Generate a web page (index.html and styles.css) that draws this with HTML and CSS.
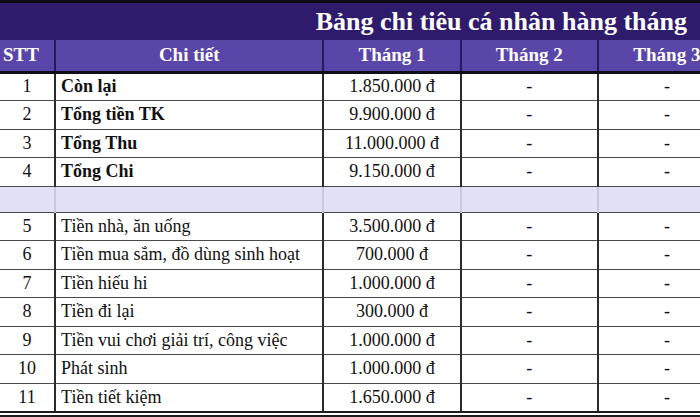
FILE: index.html
```html
<!DOCTYPE html>
<html lang="vi">
<head>
<meta charset="utf-8">
<title>Bảng chi tiêu cá nhân hàng tháng</title>
<link rel="stylesheet" href="styles.css">
</head>
<body>
<div class="sheet">
  <div class="title-bar"><h1 class="title">Bảng chi tiêu cá nhân hàng tháng</h1></div>
  <table class="grid">
    <colgroup>
      <col class="c-stt"><col class="c-detail"><col class="c-m"><col class="c-m"><col class="c-m">
    </colgroup>
    <thead>
      <tr class="head">
        <th>STT</th><th>Chi tiết</th><th>Tháng 1</th><th>Tháng 2</th><th>Tháng 3</th>
      </tr>
    </thead>
    <tbody>
      <tr class="sum"><td class="n">1</td><td class="d">Còn lại</td><td class="v">1.850.000 đ</td><td class="v">-</td><td class="v">-</td></tr>
      <tr class="sum"><td class="n">2</td><td class="d">Tổng tiền TK</td><td class="v">9.900.000 đ</td><td class="v">-</td><td class="v">-</td></tr>
      <tr class="sum"><td class="n">3</td><td class="d">Tổng Thu</td><td class="v">11.000.000 đ</td><td class="v">-</td><td class="v">-</td></tr>
      <tr class="sum"><td class="n">4</td><td class="d">Tổng Chi</td><td class="v">9.150.000 đ</td><td class="v">-</td><td class="v">-</td></tr>
      <tr class="gap"><td></td><td></td><td></td><td></td><td></td></tr>
      <tr><td class="n">5</td><td class="d">Tiền nhà, ăn uống</td><td class="v">3.500.000 đ</td><td class="v">-</td><td class="v">-</td></tr>
      <tr><td class="n">6</td><td class="d">Tiền mua sắm, đồ dùng sinh hoạt</td><td class="v">700.000 đ</td><td class="v">-</td><td class="v">-</td></tr>
      <tr><td class="n">7</td><td class="d">Tiền hiếu hi</td><td class="v">1.000.000 đ</td><td class="v">-</td><td class="v">-</td></tr>
      <tr><td class="n">8</td><td class="d">Tiền đi lại</td><td class="v">300.000 đ</td><td class="v">-</td><td class="v">-</td></tr>
      <tr><td class="n">9</td><td class="d">Tiền vui chơi giải trí, công việc</td><td class="v">1.000.000 đ</td><td class="v">-</td><td class="v">-</td></tr>
      <tr><td class="n">10</td><td class="d">Phát sinh</td><td class="v">1.000.000 đ</td><td class="v">-</td><td class="v">-</td></tr>
      <tr class="last"><td class="n">11</td><td class="d">Tiền tiết kiệm</td><td class="v">1.650.000 đ</td><td class="v">-</td><td class="v">-</td></tr>
    </tbody>
  </table>
  <div class="foot-line"></div>
</div>
</body>
</html>
```
FILE: styles.css
```css
html, body {
  margin: 0;
  padding: 0;
  background: #ffffff;
}

.sheet {
  width: 700px;
  height: 417px;
  overflow: hidden;
  font-family: "Liberation Serif", "Times New Roman", serif;
  color: #111;
  border-top: 3px solid #0c0a14;
  box-sizing: border-box;
}

.title-bar {
  height: 37px;
  background: #2e1b6c;
  display: flex;
  align-items: center;
  justify-content: flex-end;
  padding-right: 13px;
}

.title {
  margin: 0;
  font-size: 26px;
  font-weight: bold;
  color: #ffffff;
}

.grid {
  width: 735px;
  table-layout: fixed;
  border-collapse: collapse;
}

.c-stt { width: 55px; }
.c-detail { width: 268px; }
.c-m { width: 137px; }

.head th {
  height: 32px;
  padding: 0;
  background: #5a45a8;
  color: #ffffff;
  font-size: 19px;
  font-weight: bold;
  text-align: center;
  border-left: 2px solid #2a1c5a;
  border-bottom: 3px solid #0f0d16;
  box-sizing: border-box;
}

.head th:first-child {
  border-left: none;
  text-align: left;
  padding-left: 3px;
}

td {
  height: 28.5px;
  padding: 0;
  font-size: 18px;
  border-top: 1px solid #4a4a4a;
  border-left: 2px solid #2b2b2b;
  white-space: nowrap;
  box-sizing: border-box;
}

td:first-child {
  border-left: none;
}

.n { text-align: center; }
.d { padding-left: 5px; }
.v { text-align: center; }

.sum .d { font-weight: bold; }

.gap td {
  height: 26px;
  background: #e2e0f6;
  border-left-color: #c9c7dc;
}

.gap td:first-child { border-left: none; }

.last td {
  border-bottom: 2px solid #1c1c1c;
}

.foot-line {
  margin-top: 2px;
  border-top: 2px solid #1c1c1c;
}
```
